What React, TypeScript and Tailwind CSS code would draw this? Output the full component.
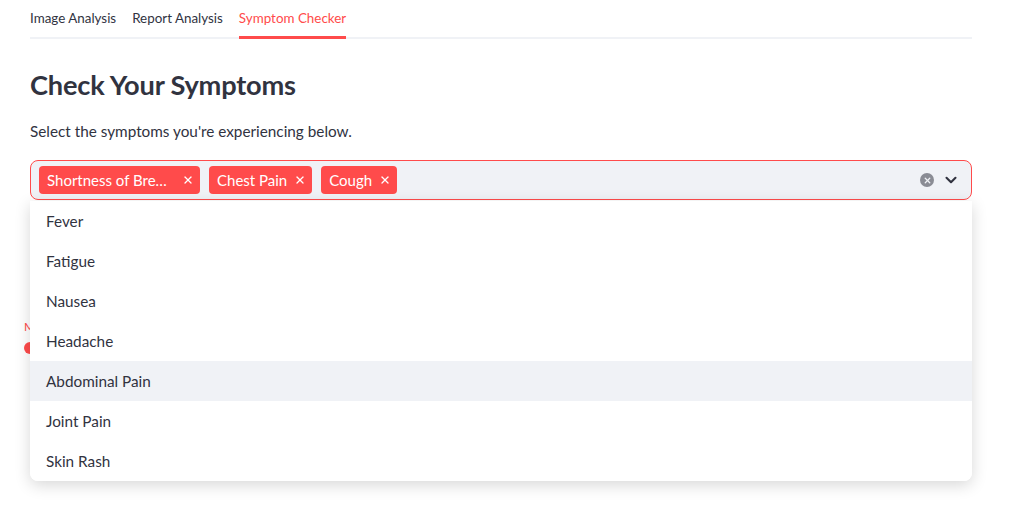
import { ChevronDown, X } from 'lucide-react';

const options = ['Fever', 'Fatigue', 'Nausea', 'Headache', 'Abdominal Pain', 'Joint Pain', 'Skin Rash'];
const selected = ['Shortness of Bre…', 'Chest Pain', 'Cough'];

export default function App() {
  return (
    <div
      className="h-[515px] w-[1018px] overflow-hidden bg-white text-[#31333f]"
      style={{ fontFamily: 'Lato, "Noto Sans", sans-serif' }}
    >
      <div className="mx-[30px] w-[942px]">
        {/* tabs */}
        <div className="flex gap-4 border-b-2 border-[#f0f2f6] pt-[9px] text-[13.4px]">
          <div className="pb-[10px] leading-[18px]">Image Analysis</div>
          <div className="pb-[10px] leading-[18px]">Report Analysis</div>
          <div className="-mb-[2px] border-b-[3px] border-[#ff4b4b] pb-[9px] leading-[18px] text-[#ff4b4b]">Symptom Checker</div>
        </div>

        <h1 className="mt-[27px] text-[27.2px] font-bold leading-[38px] tracking-[-0.2px]">Check Your Symptoms</h1>
        <p className="mt-[15px] text-[15.3px] leading-[24px]">Select the symptoms you're experiencing below.</p>

        <div className="relative mt-[17px]">
          {/* multiselect */}
          <div className="flex h-[40px] items-center rounded-lg border border-[#ff4b4b] bg-[#f0f2f6] pl-[8px] pr-[11px]">
            <div className="flex flex-1 gap-[9px]">
              {selected.map((s, i) => (
                <div key={s} className="flex h-[28px] items-center gap-[7px] rounded bg-[#ff4b4b] pl-[8px] pr-[6px] text-[15px] text-white">
                  <span className={i === 0 ? 'w-[128px]' : ''}>{s}</span>
                  <X size={12} strokeWidth={2.6} />
                </div>
              ))}
            </div>
            <div className="flex items-center gap-[8px]">
              <div className="flex h-[14px] w-[14px] items-center justify-center rounded-full bg-[#8a8c94]">
                <X size={9} strokeWidth={3.5} color="#f0f2f6" />
              </div>
              <ChevronDown size={18} strokeWidth={2.8} color="#31333f" />
            </div>
          </div>

          {/* slider partly under the menu */}
          <div className="relative mt-[120px] h-[40px]">
            <div className="absolute -left-[6px] top-0 text-[12px] leading-[14px] text-[#ff4b4b]">Mild</div>
            <div className="absolute -left-[6px] top-[22px] h-[12px] w-[12px] rounded-full bg-[#ff4b4b]" />
          </div>

          {/* dropdown menu */}
          <div className="absolute left-0 top-[41px] w-[942px] overflow-hidden rounded-b-lg bg-white shadow-[0_4px_16px_rgba(0,0,0,0.16)]">
            {options.map((o) => (
              <div
                key={o}
                className={`flex h-[40px] items-center pl-[16px] text-[15.3px] text-[#31333f] ${o === 'Abdominal Pain' ? 'bg-[#f0f2f6]' : 'bg-white'}`}
              >
                {o}
              </div>
            ))}
          </div>
        </div>
      </div>
    </div>
  );
}
